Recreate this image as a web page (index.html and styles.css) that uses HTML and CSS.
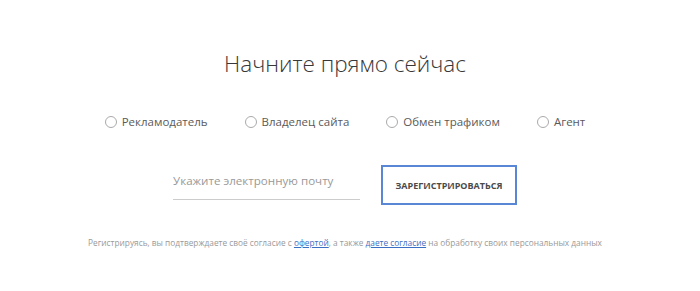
FILE: index.html
```html
<!DOCTYPE html>
<html lang="ru">
<head>
    <meta charset="UTF-8">
    <meta name="viewport" content="width=device-width, initial-scale=1.0">
    <title>Начните прямо сейчас</title>
    <link rel="stylesheet" href="styles.css">
</head>
<body>
    <div class="signup">
        <!-- Heading -->
        <h1 class="signup-title">Начните прямо сейчас</h1>

        <!-- Role selection -->
        <div class="roles">
            <label class="role"><input type="radio" name="role"><span class="radio"></span>Рекламодатель</label>
            <label class="role"><input type="radio" name="role"><span class="radio"></span>Владелец сайта</label>
            <label class="role"><input type="radio" name="role"><span class="radio"></span>Обмен трафиком</label>
            <label class="role"><input type="radio" name="role"><span class="radio"></span>Агент</label>
        </div>

        <!-- Email form -->
        <form class="signup-form" onsubmit="return false">
            <input class="email" type="email" placeholder="Укажите электронную почту">
            <button class="submit" type="submit">Зарегистрироваться</button>
        </form>

        <!-- Agreement note -->
        <p class="note">Регистрируясь, вы подтверждаете своё согласие с <a href="#">офертой</a>, а также <a href="#">даете согласие</a> на обработку своих персональных данных</p>
    </div>
</body>
</html>
```

FILE: styles.css
```css
body {
    font-family: "Open Sans", Arial, sans-serif;
    background-color: #fff;
    margin: 0;
    padding: 0 10px 0 0;
}

.signup {
    display: flex;
    flex-direction: column;
    align-items: center;
    padding-top: 46px;
}

.signup-title {
    font-size: 22.5px;
    font-weight: 300;
    color: #383838;
    margin: 0;
    line-height: 36px;
}

/* Radio buttons */
.roles {
    display: flex;
    gap: 37px;
    margin-top: 32px;
}

.role {
    display: flex;
    align-items: center;
    font-size: 11.5px;
    color: #5a5a5a;
    cursor: pointer;
}

.role input {
    display: none;
}

.radio {
    width: 10px;
    height: 10px;
    border: 1px solid #aaa;
    border-radius: 50%;
    margin-right: 5px;
}

/* Email + button */
.signup-form {
    display: flex;
    align-items: flex-start;
    margin-top: 36px;
}

.email {
    width: 187px;
    border: none;
    border-bottom: 1px solid #ccc;
    padding: 8px 0 11px;
    margin: 0;
    font-family: inherit;
    font-size: 11.6px;
    color: #333;
    outline: none;
}

.email::placeholder {
    color: #999;
}

.submit {
    margin-left: 21px;
    width: 136px;
    height: 40px;
    border: 2px solid #5a86d6;
    background-color: #fff;
    font-family: inherit;
    font-size: 9px;
    font-weight: 700;
    color: #4a4a4a;
    text-transform: uppercase;
    cursor: pointer;
}

/* Footnote */
.note {
    font-size: 8.3px;
    color: #999;
    margin: 32px 0 0;
}

.note a {
    color: #3b6fc4;
}
```
